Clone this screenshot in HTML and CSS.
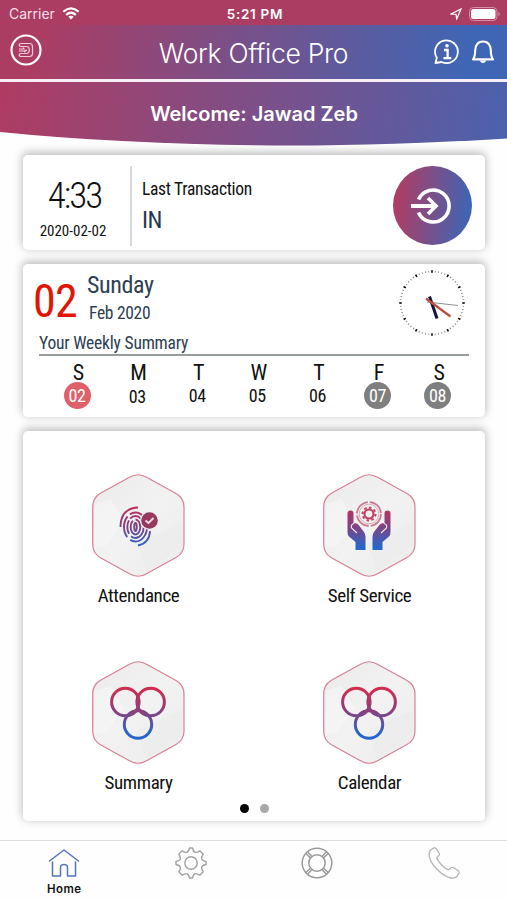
FILE: index.html
```html
<!DOCTYPE html>
<html lang="en">
<head>
    <meta charset="UTF-8">
    <meta name="viewport" content="width=device-width, initial-scale=1.0">
    <title>Work Office Pro</title>
    <link rel="stylesheet" href="styles.css">
</head>
<body>
    <!-- shared shapes -->
    <svg class="defs" width="0" height="0">
        <defs>
            <linearGradient id="brand" gradientUnits="userSpaceOnUse" x1="0" y1="29" x2="0" y2="80">
                <stop offset="0" stop-color="#d02c50"/>
                <stop offset="0.5" stop-color="#7a4589"/>
                <stop offset="0.85" stop-color="#2766c8"/>
            </linearGradient>
            <linearGradient id="paper" x1="0" y1="0" x2="1" y2="1">
                <stop offset="0" stop-color="#ebebec"/>
                <stop offset="0.5" stop-color="#f2f2f3"/>
                <stop offset="1" stop-color="#ececed"/>
            </linearGradient>
            <g id="hexagon">
                <path d="M37 3.500Q46 -2 55 3.500L84 19.500Q92 24 92 33V70Q92 79 84 83.500L55 99.500Q46 105 37 99.500L8 83.500Q.7 79 .7 70V33Q.7 24 8 19.500Z" fill="url(#paper)" stroke="#d98093" stroke-width="1.200"/>
                <path d="M3 30L18 25L32 47L14 72L2 74Z" fill="#fff" opacity=".3"/>
                <path d="M44 70L90 49V71L55 97Z" fill="#dcdcde" opacity=".12"/>
            </g>
            <g id="rings" fill="none" stroke="url(#brand)" stroke-width="3">
                <circle cx="33.300" cy="41" r="13.700"/>
                <circle cx="58.700" cy="41" r="13.700"/>
                <circle cx="46" cy="63.500" r="13.700"/>
                <g fill="url(#brand)" stroke="none">
                    <ellipse cx="46" cy="41" rx="2.300" ry="7"/>
                    <ellipse cx="39.800" cy="52.300" rx="2.300" ry="6" transform="rotate(61 39.800 52.300)"/>
                    <ellipse cx="52.200" cy="52.300" rx="2.300" ry="6" transform="rotate(-61 52.200 52.300)"/>
                </g>
            </g>
        </defs>
    </svg>

    <div class="status-bar">
        <div class="carrier">
            <span>Carrier</span>
            <svg width="18" height="13" viewBox="0 0 18 13" fill="none" stroke="#fff" stroke-width="2.2">
                <path d="M1.3 4.8Q9 -2 16.7 4.8M4.2 7.9Q9 3.6 13.8 7.9"/>
                <path d="M9 12.5L6.3 9.8Q9 7.6 11.7 9.8Z" fill="#fff" stroke="none"/>
            </svg>
        </div>
        <span class="time">5:21 PM</span>
        <div class="battery">
            <svg width="12" height="12" viewBox="0 0 12 12" fill="none" stroke="#fff" stroke-width="1.2">
                <path d="M1 6L11 1L6.7 11L6 6.3Z"/>
            </svg>
            <svg width="32" height="14" viewBox="0 0 32 14">
                <rect x=".5" y=".5" width="27.5" height="13" rx="4" fill="none" stroke="#d98da6"/>
                <rect x="2" y="2" width="24.5" height="10" rx="2.5" fill="#fff"/>
                <path d="M29.5 4.5Q32 7 29.5 9.5Z" fill="#d98da6"/>
            </svg>
        </div>
    </div>

    <div class="header">
        <svg class="logout" width="32" height="32" viewBox="0 0 32 32" fill="none" stroke="#fff">
            <circle cx="16" cy="16" r="14.5" stroke-width="2.2"/>
            <path d="M11.3 9.500H19.500Q22.500 9.500 22.500 12.500V19.500Q22.500 22.500 19.500 22.500H11.300Q9.200 22.500 9.200 21Q9.200 19.500 11.300 19.500H16.500Q19.300 19.500 19.300 16Q19.300 12.500 16.500 12.500H11.300Q9.200 12.500 9.200 11Q9.200 9.500 11.300 9.500ZM9 15H14L13 13.500M9 17H14L17 16L14 18" stroke="#f3c9db" stroke-width="1.200"/>
        </svg>
        <h1 class="title">Work Office Pro</h1>
        <div class="actions">
            <svg width="26" height="26" viewBox="0 0 26 26" fill="none" stroke="#fff" stroke-width="1.8">
                <path d="M1.5 24L2.8 18.8A11.4 11.4 0 1 1 7.5 23Z" stroke-linejoin="round"/>
                <path d="M10 11H13.6V19M9.5 19.2H17.3" stroke-width="2.3"/>
                <circle cx="13" cy="6.8" r="1.8" fill="#fff" stroke="none"/>
            </svg>
            <svg width="24" height="24" viewBox="0 0 24 24" fill="none" stroke="#fff" stroke-width="2.1" stroke-linejoin="round">
                <path d="M2 19.4Q4.2 16.5 4.2 10Q5 1.5 12 1.5Q19 1.5 19.8 10Q19.8 16.5 22 19.4Z"/>
                <path d="M8.5 20.5Q12 25.5 15.5 20.5Z" fill="#fff" stroke="none"/>
            </svg>
        </div>
    </div>

    <div class="banner">
        <svg class="banner-bg" width="507" height="64" viewBox="0 0 507 64">
            <defs>
                <linearGradient id="bannerFill" gradientUnits="userSpaceOnUse" x1="0" y1="0" x2="520" y2="90">
                    <stop offset="0" stop-color="#af3c62"/>
                    <stop offset="1" stop-color="#4863b0"/>
                </linearGradient>
            </defs>
            <path d="M0 0H507V56.5Q390 63.500 290 63.500Q130 63 0 50Z" fill="url(#bannerFill)"/>
        </svg>
        <p class="welcome">Welcome: Jawad Zeb</p>
    </div>

    <div class="content">
        <div class="card transaction">
            <div class="stamp">
                <span class="clock-text">4:33</span>
                <span class="stamp-date">2020-02-02</span>
            </div>
            <div class="last">
                <span class="last-label">Last Transaction</span>
                <span class="last-value">IN</span>
            </div>
            <div class="punch">
                <svg width="40" height="36" viewBox="0 0 40 36" fill="none" stroke="#fff" stroke-width="3.600">
                    <path d="M7.500 11.500A16 16 0 1 1 7.500 24.500"/>
                    <path d="M0 18H24" stroke-width="4"/>
                    <path d="M17 10L25 18L17 26" stroke-width="3.600"/>
                </svg>
            </div>
        </div>

        <div class="card week">
            <div class="today">
                <span class="today-num">02</span>
                <div class="today-text">
                    <span class="day-name">Sunday</span>
                    <span class="month">Feb 2020</span>
                </div>
                <svg class="clock" width="66" height="66" viewBox="0 0 66 66" fill="none">
                    <circle cx="33" cy="33" r="31.500" pathLength="240" stroke="#777" stroke-width="1.600" stroke-dasharray="1 3" stroke-dashoffset=".5"/>
                    <circle cx="33" cy="33" r="31.500" pathLength="240" stroke="#111" stroke-width="2.600" stroke-dasharray="2 18" stroke-dashoffset="1"/>
                    <path d="M28 32L59 35.500" stroke="#8d9694" stroke-width="1.200"/>
                    <path d="M30.500 26.500L38 48.500" stroke="#14143c" stroke-width="3"/>
                    <path d="M27 28.500L51.500 46.500" stroke="#b8503c" stroke-width="2.200"/>
                </svg>
            </div>
            <p class="week-title">Your Weekly Summary</p>
            <div class="days">
                <div class="day"><span class="letter">S</span><span class="num today-mark">02</span></div>
                <div class="day"><span class="letter">M</span><span class="num low">03</span></div>
                <div class="day"><span class="letter">T</span><span class="num">04</span></div>
                <div class="day"><span class="letter">W</span><span class="num">05</span></div>
                <div class="day"><span class="letter">T</span><span class="num">06</span></div>
                <div class="day"><span class="letter">F</span><span class="num off">07</span></div>
                <div class="day"><span class="letter">S</span><span class="num off">08</span></div>
            </div>
        </div>

        <div class="card menu">
            <div class="menu-grid">
                <div class="menu-item">
                    <svg width="93" height="104" viewBox="0 0 93 104">
                        <use href="#hexagon"/>
                        <g fill="none" stroke="url(#brand)" stroke-width="1.900">
                            <ellipse cx="43.500" cy="53" rx="1.300" ry="4"/>
                            <ellipse cx="43.500" cy="53" rx="4.800" ry="7.500" stroke-dasharray="26 3"/>
                            <ellipse cx="43.500" cy="53" rx="8.200" ry="11" stroke-dasharray="20 3 14 2"/>
                            <ellipse cx="43.500" cy="53" rx="11.500" ry="14.500" stroke-dasharray="34 4 22 3" stroke-dashoffset="8"/>
                            <path d="M28.500 53Q28.500 34.500 46 33.500M46 71.500Q57.500 69 58 57"/>
                        </g>
                        <circle cx="57.500" cy="46.500" r="9.500" fill="#eee"/>
                        <circle cx="57.500" cy="46.500" r="8.300" fill="#96395f"/>
                        <path d="M53.500 46.500L56.500 49L61.500 44" fill="none" stroke="#f3d9e4" stroke-width="2"/>
                    </svg>
                    <span class="menu-label">Attendance</span>
                </div>
                <div class="menu-item">
                    <svg width="93" height="104" viewBox="0 0 93 104">
                        <use href="#hexagon"/>
                        <g fill="none" stroke="#c4405f">
                            <circle cx="46" cy="40" r="12" stroke-width="1.800" stroke="#c87d92" stroke-dasharray="17 2"/>
                            <circle cx="46" cy="40" r="9.800" stroke-width=".8" stroke="#d79aaa"/>
                            <circle cx="46" cy="40" r="4.500" stroke-width="2.200"/>
                            <circle cx="46" cy="40" r="6.500" stroke-width="2" pathLength="32" stroke-dasharray="2 2"/>
                        </g>
                        <g fill="url(#brand)">
                            <path d="M24.500 39.500Q24.500 36.500 27.500 36.500Q30.500 36.500 30.500 39.500V49.500Q34 48.500 36 51.500L41 58Q42.500 60 42.500 63V76H32.500V68L26 62.500Q24.500 61 24.500 58Z"/>
                            <path d="M67.500 39.500Q67.500 36.500 64.500 36.500Q61.500 36.500 61.500 39.500V49.500Q58 48.500 56 51.500L51 58Q49.500 60 49.500 63V76H59.500V68L66 62.500Q67.500 61 67.500 58Z"/>
                        </g>
                        <path d="M34 59L28.500 54Q27.500 50.500 31 49.500M58 59L63.500 54Q64.500 50.500 61 49.500" fill="none" stroke="#eee" stroke-width="1.100"/>
                    </svg>
                    <span class="menu-label">Self Service</span>
                </div>
                <div class="menu-item">
                    <svg width="93" height="104" viewBox="0 0 93 104">
                        <use href="#hexagon"/>
                        <use href="#rings"/>
                    </svg>
                    <span class="menu-label">Summary</span>
                </div>
                <div class="menu-item">
                    <svg width="93" height="104" viewBox="0 0 93 104">
                        <use href="#hexagon"/>
                        <use href="#rings"/>
                    </svg>
                    <span class="menu-label">Calendar</span>
                </div>
            </div>
            <div class="pager">
                <span class="dot active"></span>
                <span class="dot"></span>
            </div>
        </div>
    </div>

    <div class="tab-bar">
        <div class="tab">
            <svg width="32" height="32" viewBox="0 0 32 32" fill="none" stroke="#5672b8" stroke-width="1.500" stroke-linecap="round" stroke-linejoin="round">
                <path d="M1.500 14L16 3L30.500 14M4.500 15V29H12.500V20.500Q12.500 17.500 16 17.500Q19.500 17.500 19.500 20.500V29H27.500V15"/>
            </svg>
            <span class="tab-label">Home</span>
        </div>
        <div class="tab">
            <svg width="32" height="32" viewBox="0 0 32 32" fill="none" stroke="#a2a2a2" stroke-width="1.400" stroke-linejoin="round">
                <path d="M14.500 1H17.500Q18.500 5 20 5.200Q21.500 6 24.800 3.800L28.200 7.200Q26 10.500 26.800 12Q27 13.500 31 14.500V17.500Q27 18.500 26.800 20Q26 21.500 28.200 24.800L24.800 28.200Q21.500 26 20 26.800Q18.500 27 17.500 31H14.500Q13.500 27 12 26.800Q10.500 26 7.200 28.200L3.800 24.800Q6 21.500 5.200 20Q5 18.500 1 17.500V14.500Q5 13.500 5.200 12Q6 10.500 3.800 7.200L7.200 3.800Q10.500 6 12 5.200Q13.500 5 14.500 1Z"/>
                <circle cx="16" cy="16" r="6.200"/>
            </svg>
        </div>
        <div class="tab">
            <svg width="32" height="32" viewBox="0 0 32 32" fill="none" stroke="#999" stroke-width="1.500">
                <circle cx="16" cy="16" r="14.800"/>
                <circle cx="16" cy="16" r="8.200"/>
                <path d="M4.800 6.500L9.600 11M6.500 4.800L11 9.600M27.200 6.500L22.400 11M25.500 4.800L21 9.600M4.800 25.500L9.600 21M6.500 27.200L11 22.400M27.200 25.500L22.400 21M25.500 27.200L21 22.400"/>
            </svg>
        </div>
        <div class="tab">
            <svg width="32" height="32" viewBox="0 0 32 32" fill="none" stroke="#b5b5b5" stroke-width="1.300" stroke-linejoin="round">
                <path d="M2.500 3L6 .9Q7.500 .5 8.500 2L11.300 6.500Q11.800 8 10.500 9L9 10.500Q8.700 12.500 13.500 17.800Q18.500 23 20.800 22.600L23 20.800Q24.500 20 26 21L30 23.500Q31.500 24.500 31 26L29 29.500Q26.500 32 21 30.500Q13 27.500 6 19Q-1.500 8.500 2.500 3Z"/>
            </svg>
        </div>
    </div>
</body>
</html>
```

FILE: styles.css
```css
* {
    box-sizing: border-box;
}

body {
    margin: 0;
    height: 900px;
    overflow: hidden;
    display: flex;
    flex-direction: column;
    font-family: Roboto, sans-serif;
    font-stretch: 75%;
    background-color: #fefefe;
    color: #111;
}

svg {
    display: block;
    flex: none;
}

.defs {
    position: absolute;
}

h1, p {
    margin: 0;
}

.status-bar {
    height: 25px;
    padding: 2px 6px 0 9px;
    display: grid;
    grid-template-columns: 1fr auto 1fr;
    align-items: center;
    background-color: #ab3d63;
    color: #fff;
    font-family: Inter, sans-serif;
    font-size: 13.5px;
}

.carrier, .battery {
    display: flex;
    align-items: center;
    gap: 7px;
}

.carrier {
    color: #f6dfe8;
    font-size: 14px;
}

.battery {
    justify-content: flex-end;
}

.time {
    font-weight: 600;
    letter-spacing: 0.7px;
}

.header {
    height: 54px;
    padding: 0 12px 0 10px;
    display: grid;
    grid-template-columns: 1fr auto 1fr;
    align-items: center;
    background: linear-gradient(98deg, #ab3d63 8%, #3f66b5 92%);
}

.logout {
    margin-bottom: 4px;
}

.title {
    color: #fff;
    font-family: Inter, sans-serif;
    font-size: 26.5px;
    font-weight: 300;
    letter-spacing: -0.3px;
    padding: 1px 0 0 2px;
}

.actions {
    display: flex;
    justify-content: flex-end;
    align-items: center;
    gap: 11px;
}

.banner {
    height: 67px;
    border-top: 3px solid #f8eef5;
    display: grid;
}

.banner-bg, .welcome {
    grid-area: 1 / 1;
}

.welcome {
    padding: 20px 0 0 1px;
    text-align: center;
    line-height: 25px;
    color: #fff;
    font-family: Inter, sans-serif;
    font-size: 20px;
    font-weight: 600;
}

.content {
    padding: 9px 22px 0 23px;
    display: flex;
    flex-direction: column;
    gap: 14px;
}

.card {
    background-color: #fff;
    border-radius: 5px;
    box-shadow: 0 -2px 9px 1px rgba(0, 0, 0, 0.25);
}

.transaction {
    height: 95px;
    padding: 11px 13px 4px 0;
    display: flex;
}

.stamp {
    width: 109px;
    padding: 11px 7px 0 0;
    border-right: 2px solid #d5d8df;
    display: flex;
    flex-direction: column;
    align-items: center;
}

.clock-text {
    padding-left: 3px;
    font-size: 37px;
    font-weight: 300;
    line-height: 38px;
    letter-spacing: -2px;
}

.stamp-date {
    margin-top: 7px;
    font-size: 15px;
    line-height: 18px;
}

.last {
    flex: 1;
    padding: 12px 0 0 10px;
    display: flex;
    flex-direction: column;
    align-items: flex-start;
}

.last-label {
    font-size: 17.5px;
    line-height: 22px;
    letter-spacing: -0.3px;
}

.last-value {
    margin-top: 6px;
    font-size: 24px;
    line-height: 28px;
    letter-spacing: -0.5px;
    color: #22384f;
}

.punch {
    width: 79px;
    height: 79px;
    padding-right: 4px;
    border-radius: 50%;
    display: flex;
    align-items: center;
    justify-content: center;
    background: linear-gradient(97deg, #b83a5c, #3568bb);
}

.week {
    height: 153px;
    padding: 6px 16px 0 16px;
}

.today {
    display: flex;
    height: 63px;
    margin-left: -6px;
}

.today-num {
    width: 54px;
    font-size: 46px;
    line-height: 62px;
    letter-spacing: -0.7px;
    color: #e01505;
}

.today-text {
    flex: 1;
    padding-top: 1px;
    display: flex;
    flex-direction: column;
    align-items: flex-start;
    color: #2d4053;
}

.day-name {
    font-size: 24px;
    line-height: 28px;
    letter-spacing: -0.4px;
}

.month {
    margin: 2px 0 0 2px;
    font-size: 17.5px;
    line-height: 24px;
    letter-spacing: -0.3px;
}

.clock {
    margin-right: 4px;
}

.week-title {
    height: 23px;
    border-bottom: 2px solid #979c9d;
    font-size: 17.5px;
    line-height: 21px;
    letter-spacing: -0.2px;
    color: #2d4053;
}

.days {
    display: grid;
    grid-template-columns: repeat(7, 60.1px);
    margin: 4px 0 0 8px;
}

.day {
    display: flex;
    flex-direction: column;
    align-items: center;
}

.letter {
    font-size: 22px;
    line-height: 26px;
    padding-left: 3px;
}

.num {
    width: 27px;
    height: 27px;
    margin-top: -4px;
    border-radius: 50%;
    font-size: 18px;
    line-height: 28px;
    letter-spacing: -0.4px;
    text-align: center;
}

.low {
    padding-top: 1px;
}

.today-mark {
    background-color: #e06069;
    color: #fff;
}

.off {
    background-color: #7f7f7f;
    color: #fff;
}

.menu {
    height: 390px;
    padding-top: 43px;
}

.menu-grid {
    height: 330px;
    display: grid;
    grid-template-columns: 1fr 1fr;
    grid-auto-rows: 187px;
}

.menu-item {
    display: flex;
    flex-direction: column;
    align-items: center;
}

.menu-label {
    margin-top: 6px;
    font-size: 19px;
    line-height: 24px;
    font-weight: 450;
    letter-spacing: -0.4px;
}

.pager {
    display: flex;
    justify-content: center;
    gap: 11px;
}

.dot {
    width: 9px;
    height: 9px;
    border-radius: 50%;
    background-color: #a8a8a8;
}

.dot.active {
    background-color: #000;
}

.tab-bar {
    height: 60px;
    margin-top: auto;
    padding: 6px 0 0 1px;
    border-top: 1px solid #dcdcdc;
    display: grid;
    grid-template-columns: repeat(4, 1fr);
}

.tab {
    display: flex;
    flex-direction: column;
    align-items: center;
}

.tab-label {
    margin-top: 3px;
    font-family: Inter, sans-serif;
    font-size: 11.5px;
    font-weight: 600;
    line-height: 14px;
    letter-spacing: 0.5px;
}
```
